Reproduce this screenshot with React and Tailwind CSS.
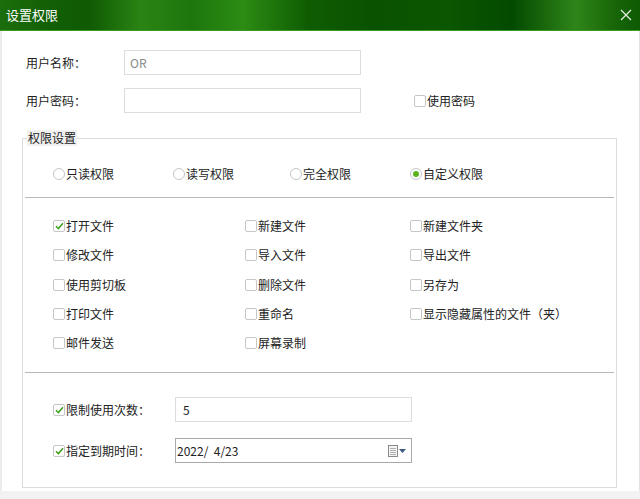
import React from "react";

const Check = ({ checked }) => (
  <span className="w-[12px] h-[12px] border border-[#c6c6c6] rounded-[2px] bg-white flex items-center justify-center shrink-0">
    {checked && (
      <svg width="9" height="8" viewBox="0 0 9 8">
        <path d="M1 4.2 L3.4 6.6 L8 1.2" fill="none" stroke="#3fa01a" strokeWidth="1.5" />
      </svg>
    )}
  </span>
);

const Radio = ({ checked }) => (
  <span className="w-[12px] h-[12px] border border-[#c6c6c6] rounded-full bg-white flex items-center justify-center shrink-0">
    {checked && <span className="w-[6px] h-[6px] rounded-full bg-[#5bb31f]" />}
  </span>
);

const CheckItem = ({ label, checked }) => (
  <div className="flex items-center gap-[1px] h-[20px]">
    <Check checked={checked} />
    <span>{label}</span>
  </div>
);

const RadioItem = ({ label, checked, w }) => (
  <div className={`flex items-center gap-[1px] h-[20px] ${w}`}>
    <Radio checked={checked} />
    <span>{label}</span>
  </div>
);

const App = () => {
  const perms = [
    ["打开文件", "新建文件", "新建文件夹"],
    ["修改文件", "导入文件", "导出文件"],
    ["使用剪切板", "删除文件", "另存为"],
    ["打印文件", "重命名", "显示隐藏属性的文件（夹）"],
    ["邮件发送", "屏幕录制", ""],
  ];

  return (
    <div className="w-[640px] h-[499px] flex flex-col bg-[#f2f2f2] text-[12px] text-[#222] font-['Microsoft_YaHei','Noto_Sans_CJK_SC',sans-serif]">
      {/* title bar */}
      <header className="h-[31px] shrink-0 flex items-center justify-between pl-[6px] pr-[8px] border-b border-[#3c9a22] bg-[linear-gradient(90deg,#1c6e0c_0%,#125f05_8%,#0f5a03_14%,#2a8414_22%,#1d760c_30%,#2c8c14_38%,#0f5d02_48%,#0a5200_58%,#0b5600_70%,#034a00_80%,#2f8519_90%,#186608_96%,#0d5a03_100%)]">
        <span className="text-white text-[13px]">设置权限</span>
        <svg width="12" height="12" viewBox="0 0 12 12">
          <path d="M1 1 L11 11 M11 1 L1 11" stroke="#e6efe3" strokeWidth="1.2" />
        </svg>
      </header>

      {/* body */}
      <div className="flex-1 bg-white border-l-2 border-[#ececec] border-r border-r-[#e2e2e2] flex flex-col">
        <div className="pt-[19px] pl-[24px] flex items-center">
          <span className="w-[98px]">用户名称：</span>
          <div className="w-[237px] h-[25px] border border-[#dddddd] flex items-center pl-[5px] text-[#888]">
            OR
          </div>
        </div>
        <div className="mt-[13px] pl-[24px] flex items-center">
          <span className="w-[98px]">用户密码：</span>
          <div className="w-[237px] h-[25px] border border-[#dddddd]" />
          <div className="ml-[53px]">
            <CheckItem label="使用密码" />
          </div>
        </div>

        <fieldset className="mt-[17px] ml-[20px] w-[595px] border border-[#dcdcdc] pb-[24px]">
          <legend className="ml-[4px] px-[1px] leading-[16px] bg-[#f0f0f0]">权限设置</legend>

          <div className="mt-[18px] pl-[30px] flex">
            <RadioItem label="只读权限" w="w-[120px]" />
            <RadioItem label="读写权限" w="w-[117px]" />
            <RadioItem label="完全权限" w="w-[120px]" />
            <RadioItem label="自定义权限" checked w="" />
          </div>

          <div className="mt-[13px] mx-[2px] border-t border-[#b8b8b8]" />

          <div className="mt-[18px] pl-[30px] grid grid-cols-[192px_165px_1fr] gap-y-[9.3px]">
            {perms.flat().map((p, i) =>
              p ? <CheckItem key={i} label={p} checked={i === 0} /> : <div key={i} />
            )}
          </div>

          <div className="mt-[19px] mx-[2px] border-t border-[#b8b8b8]" />

          <div className="mt-[24px] pl-[30px] flex items-center">
            <div className="w-[122px]">
              <CheckItem label="限制使用次数：" checked />
            </div>
            <div className="w-[237px] h-[25px] border border-[#dddddd] flex items-center pl-[7px]">5</div>
          </div>
          <div className="mt-[16px] pl-[30px] flex items-center">
            <div className="w-[122px]">
              <CheckItem label="指定到期时间：" checked />
            </div>
            <div className="w-[237px] h-[25px] border border-[#a9a9a9] flex items-center pl-[1px] pr-[5px] justify-between">
              <span>2022/&nbsp;&nbsp;4/23</span>
              <span className="flex items-center gap-[1px]">
                <svg width="10" height="12" viewBox="0 0 10 12">
                  <rect x="0.5" y="0.5" width="9" height="11" fill="#f4f4f4" stroke="#8a8a8a" />
                  <path d="M2 3.5 H8 M2 5.5 H8 M2 7.5 H8 M2 9.5 H8" stroke="#b0b0b0" strokeWidth="1" />
                </svg>
                <svg width="7" height="4" viewBox="0 0 7 4">
                  <path d="M0 0 H7 L3.5 4 Z" fill="#3d5a80" />
                </svg>
              </span>
            </div>
          </div>
        </fieldset>
        <div className="flex-1" />
      </div>
      <div className="h-[8px] shrink-0 bg-[#f2f2f2]" />
    </div>
  );
};

export default App;
